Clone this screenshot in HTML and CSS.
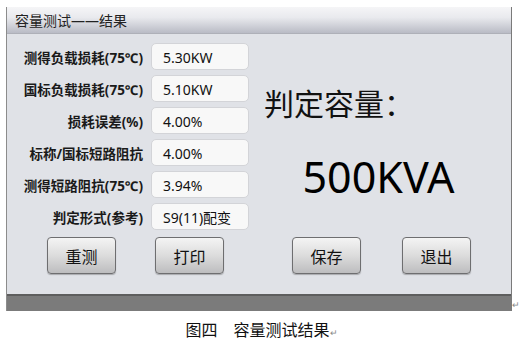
FILE: index.html
```html
<!DOCTYPE html>
<html lang="zh">
<head>
<meta charset="utf-8">
<title>容量测试——结果</title>
<link rel="stylesheet" href="styles.css">
</head>
<body>
<div class="win">
<div class="title">容量测试——结果</div>
<div class="main">
<div class="col left">
<div class="row"><span class="lbl">测得负载损耗(75℃)</span><span class="val">5.30KW</span></div>
<div class="row"><span class="lbl">国标负载损耗(75℃)</span><span class="val">5.10KW</span></div>
<div class="row"><span class="lbl">损耗误差(%)</span><span class="val">4.00%</span></div>
<div class="row"><span class="lbl">标称/国标短路阻抗</span><span class="val">4.00%</span></div>
<div class="row"><span class="lbl">测得短路阻抗(75℃)</span><span class="val">3.94%</span></div>
<div class="row"><span class="lbl">判定形式(参考)</span><span class="val">S9(11)配变</span></div>
<div class="btns btns-l"><button>重测</button><button>打印</button></div>
</div>
<div class="col right">
<div class="head">判定容量：</div>
<div class="cap">500KVA</div>
<div class="btns btns-r"><button>保存</button><button>退出</button></div>
</div>
</div>
<div class="status"></div>
<span class="ret ret-win">↵</span>
</div>
<p class="caption">图四　容量测试结果<span class="ret">↵</span></p>
</body>
</html>
```

FILE: styles.css
```css
*{box-sizing:border-box;margin:0;padding:0;}
body{background:#fff;font-family:"Noto Sans","Noto Sans CJK SC",sans-serif;color:#111;}
.win{position:relative;width:506px;margin:7px 0 0 6px;border-left:1px solid #8c8c8c;border-right:1px solid #7a7a7a;}
.title{height:27px;line-height:27px;padding-left:8px;font-size:14px;color:#222;background:linear-gradient(#f5f5f7,#e9eaee 40%,#b9bbc5);border-bottom:1px solid #aeb0b8;}
.main{display:flex;height:260px;background:#e0e2e7;padding:9px 0 20px;}
.col{display:flex;flex-direction:column;}
.left{width:248px;}
.right{flex:1;}
.row{display:flex;align-items:center;height:27px;margin-bottom:5px;}
.lbl{width:136px;text-align:right;font-weight:bold;font-size:13.5px;color:#1a1a1a;white-space:nowrap;}
.val{margin-left:8px;width:98px;height:27px;line-height:27px;padding-left:11px;font-size:14px;background:#f8f8f8;border:1px solid #d3d4d8;border-radius:5px;}
.btns{display:flex;margin-top:auto;}
.btns-l{padding-left:40px;gap:39px;}
.btns-r{padding-left:37px;gap:41px;}
button{width:69px;height:37px;font-family:"Noto Sans CJK SC",sans-serif;font-size:16px;color:#111;background:linear-gradient(#f4f4f4,#dcdcdc 50%,#bdbdbf);border:1px solid #6e6e70;border-radius:4px;box-shadow:0 1px 1px rgba(0,0,0,.25);}
.head{margin:41px 0 0 9px;font-size:30px;line-height:36px;font-family:"Noto Sans CJK SC",sans-serif;color:#111;}
.cap{margin-top:33px;padding-right:9px;text-align:center;font-size:43px;line-height:48px;color:#000;}
.status{height:17px;background:#7b7b7b;border-top:2px solid #5e5e5e;}
.ret{font-size:9px;color:#888;}
.ret-win{position:absolute;right:-9px;bottom:0;}
.caption{margin-top:6px;text-align:center;font-size:16px;font-family:"Noto Sans CJK SC",sans-serif;color:#111;padding-left:2px;}
```
